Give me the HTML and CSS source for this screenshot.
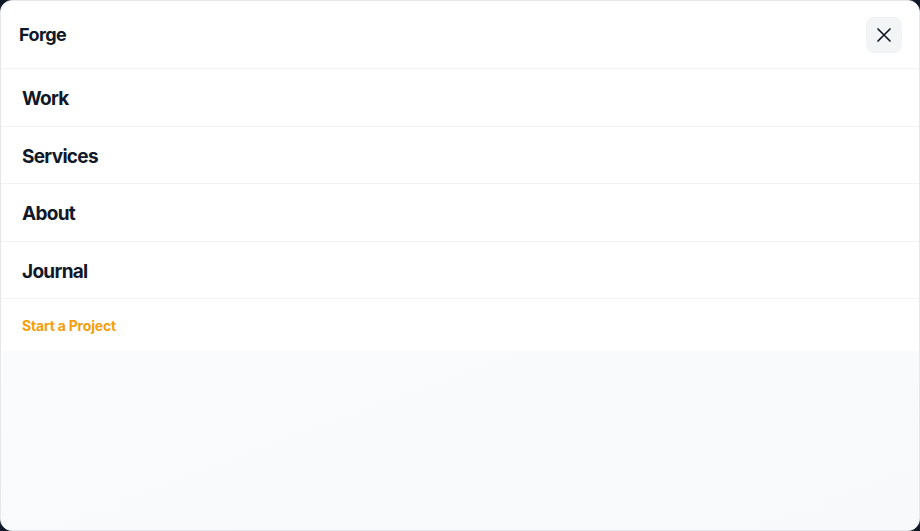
FILE: index.html
```html
<!DOCTYPE html>
<html>
<head>
<meta charset="utf-8">
<link rel="stylesheet" href="styles.css">
</head>
<body>
<div class="panel">
  <header class="head">
    <span class="brand">Forge</span>
    <button class="close" aria-label="Close">
      <svg width="16" height="16" viewBox="0 0 16 16" fill="none" stroke="#111827" stroke-width="1.7" stroke-linecap="round"><path d="M2 2L14 14M14 2L2 14"/></svg>
    </button>
  </header>
  <nav class="nav">
    <a class="item">Work</a>
    <a class="item">Services</a>
    <a class="item">About</a>
    <a class="item">Journal</a>
  </nav>
  <div class="cta"><a class="cta-link">Start a Project</a></div>
  <div class="rest"></div>
</div>
</body>
</html>
```
FILE: styles.css
```css
html, body { margin: 0; padding: 0; background: #111827; }
body { width: 920px; height: 531px; overflow: hidden; font-family: "Inter", "Liberation Sans", sans-serif; }
.panel {
  box-sizing: border-box;
  width: 920px; height: 531px;
  background: #fff;
  border: 1px solid #e5e7eb;
  border-radius: 12px;
  overflow: hidden;
  display: flex; flex-direction: column;
}
.head {
  height: 68px; box-sizing: border-box; flex: none;
  display: flex; align-items: center; justify-content: space-between;
  padding: 0 17px 0 18px;
  border-bottom: 1px solid #f1f2f4;
}
.brand { font-size: 18px; font-weight: 700; color: #111827; letter-spacing: -0.6px; }
.close {
  width: 36px; height: 36px; border: 0; border-radius: 8px; background: #f3f4f6;
  display: flex; align-items: center; justify-content: center; padding: 0;
}
.nav { display: flex; flex-direction: column; flex: none; }
.item {
  height: 57.5px; box-sizing: border-box;
  padding: 3px 21px 0;
  display: flex; align-items: center;
  font-size: 19px; font-weight: 700; color: #111827; letter-spacing: -0.7px;
  border-bottom: 1px solid #f1f2f4;
}
.cta { height: 52px; flex: none; display: flex; align-items: center; padding: 0 21px; }
.cta-link { font-size: 14px; font-weight: 700; color: #f59e0b; letter-spacing: -0.2px; }
.rest { flex: 1; background: linear-gradient(160deg, #fafbfc, #f8f9fa); }
```
